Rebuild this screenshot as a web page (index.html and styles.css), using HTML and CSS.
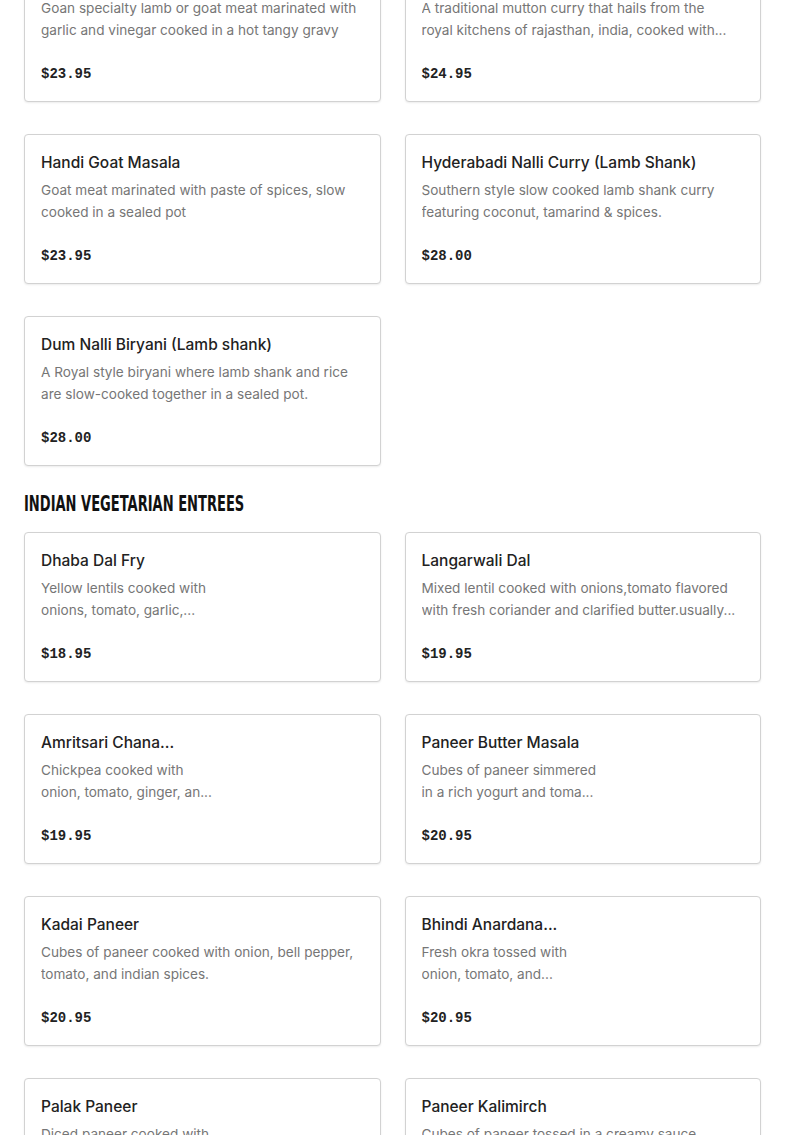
FILE: index.html
```html
<!DOCTYPE html>
<html lang="en">
<head>
<meta charset="utf-8">
<title>Menu</title>
<link rel="stylesheet" href="styles.css">
</head>
<body>
<main class="menu">
  <section class="section section--first">
    <div class="grid">
      <article class="card">
        <h3 class="card-title">Goat Vindaloo</h3>
        <div class="card-desc">
          <span class="line">Goan specialty lamb or goat meat marinated with</span>
          <span class="line">garlic and vinegar cooked in a hot tangy gravy</span>
        </div>
        <div class="card-price">$23.95</div>
      </article>
      <article class="card">
        <h3 class="card-title">Laal Maas</h3>
        <div class="card-desc">
          <span class="line">A traditional mutton curry that hails from the</span>
          <span class="line">royal kitchens of rajasthan, india, cooked with...</span>
        </div>
        <div class="card-price">$24.95</div>
      </article>
      <article class="card">
        <h3 class="card-title">Handi Goat Masala</h3>
        <div class="card-desc">
          <span class="line">Goat meat marinated with paste of spices, slow</span>
          <span class="line">cooked in a sealed pot</span>
        </div>
        <div class="card-price">$23.95</div>
      </article>
      <article class="card">
        <h3 class="card-title">Hyderabadi Nalli Curry (Lamb Shank)</h3>
        <div class="card-desc">
          <span class="line">Southern style slow cooked lamb shank curry</span>
          <span class="line">featuring coconut, tamarind &amp; spices.</span>
        </div>
        <div class="card-price">$28.00</div>
      </article>
      <article class="card">
        <h3 class="card-title">Dum Nalli Biryani (Lamb shank)</h3>
        <div class="card-desc">
          <span class="line">A Royal style biryani where lamb shank and rice</span>
          <span class="line">are slow-cooked together in a sealed pot.</span>
        </div>
        <div class="card-price">$28.00</div>
      </article>
    </div>
  </section>

  <section class="section">
    <h2 class="section-title"><span class="section-title-text">INDIAN VEGETARIAN ENTREES</span></h2>
    <div class="grid">
      <article class="card">
        <h3 class="card-title">Dhaba Dal Fry</h3>
        <div class="card-desc">
          <span class="line">Yellow lentils cooked with</span>
          <span class="line">onions, tomato, garlic,...</span>
        </div>
        <div class="card-price">$18.95</div>
      </article>
      <article class="card">
        <h3 class="card-title">Langarwali Dal</h3>
        <div class="card-desc">
          <span class="line">Mixed lentil cooked with onions,tomato flavored</span>
          <span class="line">with fresh coriander and clarified butter.usually...</span>
        </div>
        <div class="card-price">$19.95</div>
      </article>
      <article class="card">
        <h3 class="card-title">Amritsari Chana...</h3>
        <div class="card-desc">
          <span class="line">Chickpea cooked with</span>
          <span class="line">onion, tomato, ginger, an...</span>
        </div>
        <div class="card-price">$19.95</div>
      </article>
      <article class="card">
        <h3 class="card-title">Paneer Butter Masala</h3>
        <div class="card-desc">
          <span class="line">Cubes of paneer simmered</span>
          <span class="line">in a rich yogurt and toma...</span>
        </div>
        <div class="card-price">$20.95</div>
      </article>
      <article class="card">
        <h3 class="card-title">Kadai Paneer</h3>
        <div class="card-desc">
          <span class="line">Cubes of paneer cooked with onion, bell pepper,</span>
          <span class="line">tomato, and indian spices.</span>
        </div>
        <div class="card-price">$20.95</div>
      </article>
      <article class="card">
        <h3 class="card-title">Bhindi Anardana...</h3>
        <div class="card-desc">
          <span class="line">Fresh okra tossed with</span>
          <span class="line">onion, tomato, and...</span>
        </div>
        <div class="card-price">$20.95</div>
      </article>
      <article class="card">
        <h3 class="card-title">Palak Paneer</h3>
        <div class="card-desc">
          <span class="line">Diced paneer cooked with</span>
          <span class="line">creamy spinach and spices...</span>
        </div>
        <div class="card-price">$20.95</div>
      </article>
      <article class="card">
        <h3 class="card-title">Paneer Kalimirch</h3>
        <div class="card-desc">
          <span class="line">Cubes of paneer tossed in a creamy sauce</span>
          <span class="line">with black pepper and spices.</span>
        </div>
        <div class="card-price">$21.95</div>
      </article>
    </div>
  </section>
</main>
</body>
</html>
```

FILE: styles.css
```css
* { box-sizing: border-box; }

html, body {
  margin: 0;
  padding: 0;
  background: #ffffff;
}

body {
  font-family: Inter, "Liberation Sans", sans-serif;
  color: #222222;
}

.menu {
  padding: 0 24px;
  margin-top: -48px;
}

.section-title {
  margin: 24px 0 14px;
  font-family: "DejaVu Sans Condensed", "Liberation Sans", sans-serif;
  font-weight: 700;
  font-size: 22px;
  line-height: 28px;
  color: #111111;
  white-space: nowrap;
}

.section-title-text {
  display: inline-block;
  transform: scaleX(0.66);
  transform-origin: left center;
}

.grid {
  display: grid;
  grid-template-columns: 1fr 1fr;
  column-gap: 24px;
  row-gap: 32px;
}

.card {
  border: 1px solid #d2d2d2;
  border-radius: 4px;
  box-shadow: 0 1px 2px rgba(0, 0, 0, 0.08);
  padding: 16px 16px 15px;
  background: #fff;
  min-width: 0;
}

.card-title {
  margin: 0;
  font-size: 15.5px;
  line-height: 24px;
  font-weight: 500;
  color: #222222;
  white-space: nowrap;
  overflow: hidden;
  text-overflow: ellipsis;
}

.card-desc {
  margin-top: 4px;
  font-size: 13.6px;
  line-height: 22px;
  color: #767676;
}

.line {
  display: block;
  white-space: nowrap;
  overflow: hidden;
}

.card-price {
  margin-top: 21px;
  font-family: "Liberation Mono", monospace;
  font-weight: 700;
  font-size: 14px;
  line-height: 24px;
  color: #222222;
}
```
